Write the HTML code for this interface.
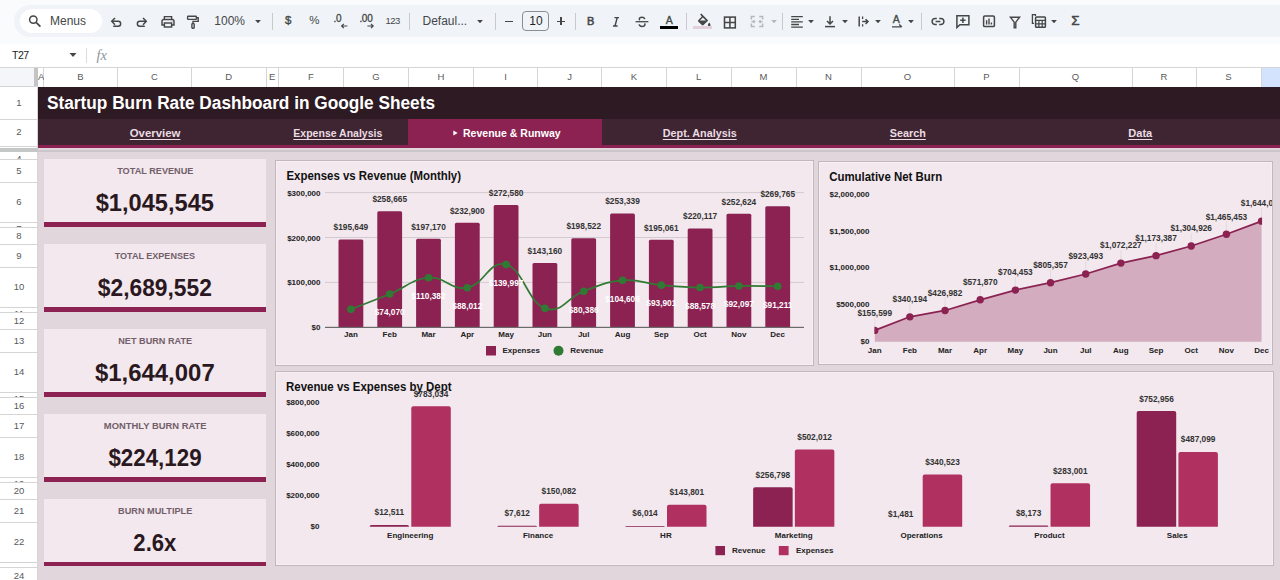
<!DOCTYPE html>
<html><head><meta charset="utf-8"><title>Startup Burn Rate Dashboard</title>
<style>
*{box-sizing:border-box;margin:0;padding:0}
html,body{width:1280px;height:580px;overflow:hidden;background:#f9fbfd;font-family:"Liberation Sans", sans-serif;}
.abs{position:absolute}
#root{position:relative;width:1280px;height:580px;overflow:hidden}
.ch{position:absolute;top:68px;height:19px;border-right:1px solid #d5d5d5;background:#fff;color:#575a5c;font-size:9.5px;line-height:18px;text-align:center}
.rh{position:absolute;left:0;width:38px;border-bottom:1px solid #d5d5d5;background:#fff;color:#575a5c;font-size:9.5px;text-align:center;overflow:hidden}
.tab{position:absolute;top:119px;height:26px;line-height:28.6px;text-underline-offset:1.6px;text-align:center;color:#eadce3;font-weight:bold;font-size:11.3px;text-decoration:underline}
.card{position:absolute;left:44px;width:222px;height:63px;background:#f2e8ee}
.cbar{position:absolute;left:44px;width:222px;height:5px;background:#8b2252}
.clab{position:absolute;left:44px;width:222px;text-align:center;color:#735f6a;font-weight:bold;font-size:9.2px;line-height:12px;white-space:nowrap}
.kv{display:inline-block}
.cval{position:absolute;left:44px;width:222px;text-align:center;color:#2a1820;font-weight:bold;font-size:23.5px;line-height:28px;white-space:nowrap}
.chart{position:absolute;background:#f2e8ee;border:1px solid #c2b7bd;overflow:hidden;box-shadow:inset 0 0 0 1px rgba(255,255,255,0.35)}
svg text{font-family:"Liberation Sans", sans-serif;}
.tb{position:absolute;top:0;height:42px}
</style></head><body><div id="root">

<div class="abs" style="left:14px;top:5px;width:1300px;height:32px;border-radius:16px;background:#f0f4f9"></div>
<div class="abs" style="left:20px;top:9px;width:82px;height:24px;border-radius:12px;background:#fff"></div>
<svg class="abs" style="left:25.00px;top:11.00px" width="20" height="20" viewBox="0 0 20 20" fill="none" stroke="#444746" stroke-width="1.5" ><circle cx="8.3" cy="8.6" r="3.7"/><path d="M11.1 11.4L15.4 15.7" stroke-width="1.7"/></svg>
<div class="abs" style="left:50px;top:13.56px;font-size:12px;line-height:14.40px;color:#444746;font-weight:normal;white-space:nowrap;">Menus</div>
<svg class="abs" style="left:106.00px;top:11.00px" width="20" height="20" viewBox="0 0 20 20" fill="none" stroke="#444746" stroke-width="1.45" ><path d="M6 10.3H12.2a2.45 2.45 0 0 1 0 4.9H7.2"/><path d="M9 6.9L5.7 10.3 9 13.7"/></svg>
<svg class="abs" style="left:131.60px;top:11.00px" width="20" height="20" viewBox="0 0 20 20" fill="none" stroke="#444746" stroke-width="1.45" ><path d="M14 10.3H7.8a2.45 2.45 0 0 0 0 4.9H12.8"/><path d="M11 6.9l3.3 3.4-3.3 3.4"/></svg>
<svg class="abs" style="left:157.80px;top:11.00px" width="20" height="20" viewBox="0 0 20 20" fill="none" stroke="#444746" stroke-width="1.45" ><path d="M6.4 8.4V5.6h7.2v2.8"/><path d="M6.2 14H4V10.2a1.8 1.8 0 0 1 1.8-1.8h8.4a1.8 1.8 0 0 1 1.8 1.8V14h-2.2"/><rect x="6.4" y="12" width="7.2" height="4"/><circle cx="14" cy="10.6" r="0.45" fill="#444746" stroke="none"/></svg>
<svg class="abs" style="left:183.00px;top:11.00px" width="20" height="20" viewBox="0 0 20 20" fill="none" stroke="#444746" stroke-width="1.4" ><rect x="4.6" y="5.2" width="8.8" height="3.2" rx="0.7"/><path d="M13.4 6.8h1.8v3.6H10v2.2"/><rect x="8.9" y="12.6" width="2.3" height="4.6" rx="0.6"/></svg>
<div class="abs" style="left:214.3px;top:13.56px;font-size:12px;line-height:14.40px;color:#444746;font-weight:normal;white-space:nowrap;">100%</div>
<svg class="abs" style="left:254.70px;top:19.90px" width="6" height="3.4" viewBox="0 0 6 3.4"><path d="M0.1 0.1h5.8L3 3.3z" fill="#444746"/></svg>
<div class="abs" style="left:272.00px;top:13px;width:1px;height:17px;background:#c7c9cc"></div>
<div class="abs" style="left:285.0px;top:13.90px;font-size:11.5px;line-height:13.80px;color:#444746;font-weight:normal;white-space:nowrap;-webkit-text-stroke:0.35px #444746;">$</div>
<div class="abs" style="left:309.2px;top:13.90px;font-size:11.5px;line-height:13.80px;color:#444746;font-weight:normal;white-space:nowrap;">%</div>
<div class="abs" style="left:333.4px;top:12.70px;font-size:10px;line-height:12.00px;color:#444746;font-weight:normal;white-space:nowrap;letter-spacing:-0.2px;-webkit-text-stroke:0.3px #444746;">.0</div>
<svg class="abs" style="left:340.00px;top:22.60px" width="9" height="6" viewBox="0 0 9 6" fill="none" stroke="#444746" stroke-width="1.5" ><path d="M7.4 3H1.6M3.8 0.8L1.6 3l2.2 2.2" stroke-width="1.2"/></svg>
<div class="abs" style="left:359.4px;top:12.70px;font-size:10px;line-height:12.00px;color:#444746;font-weight:normal;white-space:nowrap;letter-spacing:-0.3px;-webkit-text-stroke:0.3px #444746;">.00</div>
<svg class="abs" style="left:365.80px;top:22.60px" width="9" height="6" viewBox="0 0 9 6" fill="none" stroke="#444746" stroke-width="1.5" ><path d="M1.4 3h5.8M5 0.8L7.2 3 5 5.2" stroke-width="1.2"/></svg>
<div class="abs" style="left:385.4px;top:15.10px;font-size:9.5px;line-height:11.40px;color:#444746;font-weight:normal;white-space:nowrap;letter-spacing:-0.45px;">123</div>
<div class="abs" style="left:409.00px;top:13px;width:1px;height:17px;background:#c7c9cc"></div>
<div class="abs" style="left:422.5px;top:13.56px;font-size:12px;line-height:14.40px;color:#444746;font-weight:normal;white-space:nowrap;">Defaul...</div>
<svg class="abs" style="left:477.30px;top:19.90px" width="6" height="3.4" viewBox="0 0 6 3.4"><path d="M0.1 0.1h5.8L3 3.3z" fill="#444746"/></svg>
<div class="abs" style="left:495.00px;top:13px;width:1px;height:17px;background:#c7c9cc"></div>
<div class="abs" style="left:505px;top:20.6px;width:8px;height:1.4px;background:#444746"></div>
<div class="abs" style="left:521.6px;top:11.3px;width:27.2px;height:19.5px;border:1px solid #8b8e90;border-radius:4px"></div>
<div class="abs" style="left:529.3px;top:13.56px;font-size:12px;line-height:14.40px;color:#1f1f1f;font-weight:normal;white-space:nowrap;">10</div>
<div class="abs" style="left:557.1px;top:20.6px;width:8px;height:1.4px;background:#444746"></div>
<div class="abs" style="left:560.4px;top:17.3px;width:1.4px;height:8px;background:#444746"></div>
<div class="abs" style="left:574.50px;top:13px;width:1px;height:17px;background:#c7c9cc"></div>
<div class="abs" style="left:587.0px;top:15.00px;font-size:11px;line-height:13.20px;color:#444746;font-weight:normal;white-space:nowrap;-webkit-text-stroke:0.55px #444746;">B</div>
<svg class="abs" style="left:606.20px;top:11.20px" width="20" height="20" viewBox="0 0 20 20" fill="none" stroke="#444746" stroke-width="1.5" ><path d="M8.4 6.6h4.6M7 15h4.6M11.2 6.6L9 15" stroke-width="1.45"/></svg>
<svg class="abs" style="left:632.30px;top:11.00px" width="20" height="20" viewBox="0 0 20 20" fill="none" stroke="#444746" stroke-width="1.45" ><path d="M12.7 8.2c-.2-1.3-1.3-2-2.7-2-1.5 0-2.7.7-2.7 1.9 0 .5.15.8.4 1.1"/><path d="M7.1 13.4c.3 1.3 1.4 2 2.9 2 1.7 0 2.9-.8 2.9-2 0-.4-.1-.7-.3-1"/><path d="M3.6 10.7h12.8" stroke-width="1.3"/></svg>
<div class="abs" style="left:665.8px;top:14.00px;font-size:10.5px;line-height:12.60px;color:#444746;font-weight:normal;white-space:nowrap;-webkit-text-stroke:0.35px #444746;">A</div>
<div class="abs" style="left:660.2px;top:26.2px;width:18px;height:2.8px;background:#000"></div>
<div class="abs" style="left:685.50px;top:13px;width:1px;height:17px;background:#c7c9cc"></div>
<svg class="abs" style="left:693.00px;top:10.80px" width="20" height="20" viewBox="0 0 20 20" fill="none" stroke="#444746" stroke-width="1.5" ><path d="M7.2 3.6l1.1-1 6.9 6.9-4.6 4.6a1.3 1.3 0 0 1-1.8 0L5.4 10.7a1.3 1.3 0 0 1 0-1.8l3.4-3.4z" fill="#444746" stroke="none"/><path d="M6.9 9.4L9.9 6.4l3 3z" fill="#f0f4f9" stroke="none"/><path d="M16.2 11.6c.9 1.2 1.3 1.9 1.3 2.5a1.3 1.3 0 0 1-2.6 0c0-.6.4-1.3 1.3-2.5z" fill="#444746" stroke="none"/></svg>
<div class="abs" style="left:693.2px;top:26.2px;width:18.6px;height:2.8px;background:#e4d0da"></div>
<svg class="abs" style="left:719.90px;top:11.60px" width="20" height="20" viewBox="0 0 20 20" fill="none" stroke="#444746" stroke-width="1.55" ><rect x="4.5" y="5.1" width="10.8" height="10.8"/><path d="M9.9 5.1v10.8M4.5 10.5h10.8"/></svg>
<svg class="abs" style="left:746.80px;top:10.80px" width="20" height="20" viewBox="0 0 20 20" fill="none" stroke="#444746" stroke-width="1.5" ><path d="M4.4 8.6V5.6h3.4M12.2 5.6h3.4v3M4.4 12.6v3h3.4M12.2 15.6h3.4v-3" stroke="#b4b7bb"/><path d="M4.4 10.6h3.2M6.4 9.2l1.4 1.4-1.4 1.4M15.6 10.6h-3.2M13.6 9.2l-1.4 1.4 1.4 1.4" stroke="#b4b7bb" stroke-width="1.2"/></svg>
<svg class="abs" style="left:771.00px;top:19.90px" width="6" height="3.4" viewBox="0 0 6 3.4"><path d="M0.1 0.1h5.8L3 3.3z" fill="#b4b7bb"/></svg>
<div class="abs" style="left:782.00px;top:13px;width:1px;height:17px;background:#c7c9cc"></div>
<svg class="abs" style="left:787.00px;top:11.00px" width="20" height="20" viewBox="0 0 20 20" fill="none" stroke="#444746" stroke-width="1.5" ><path d="M4.2 5.7h11.6M4.2 8.3h7.8M4.2 10.9h11.6M4.2 13.5h7.8M4.2 16.1h11.6" stroke-width="1.3"/></svg>
<svg class="abs" style="left:808.30px;top:19.90px" width="6" height="3.4" viewBox="0 0 6 3.4"><path d="M0.1 0.1h5.8L3 3.3z" fill="#444746"/></svg>
<svg class="abs" style="left:819.80px;top:11.00px" width="20" height="20" viewBox="0 0 20 20" fill="none" stroke="#444746" stroke-width="1.5" ><path d="M10 5.2v7.6M7 10l3 3 3-3"/><path d="M5 15.6h10"/></svg>
<svg class="abs" style="left:842.00px;top:19.90px" width="6" height="3.4" viewBox="0 0 6 3.4"><path d="M0.1 0.1h5.8L3 3.3z" fill="#444746"/></svg>
<svg class="abs" style="left:852.50px;top:11.00px" width="20" height="20" viewBox="0 0 20 20" fill="none" stroke="#444746" stroke-width="1.5" ><path d="M6.2 5.6v10"/><path d="M9.2 10.6h5.6M12.6 8.2l2.4 2.4-2.4 2.4"/><path d="M9.6 5.6v2.4M9.6 13.2v2.4" stroke-width="1.3"/></svg>
<svg class="abs" style="left:875.30px;top:19.90px" width="6" height="3.4" viewBox="0 0 6 3.4"><path d="M0.1 0.1h5.8L3 3.3z" fill="#444746"/></svg>
<div class="abs" style="left:892.8px;top:13.20px;font-size:10.5px;line-height:12.60px;color:#444746;font-weight:normal;white-space:nowrap;-webkit-text-stroke:0.35px #444746;">A</div>
<svg class="abs" style="left:887.00px;top:12.00px" width="20" height="20" viewBox="0 0 20 20" fill="none" stroke="#444746" stroke-width="1.5" ><path d="M5 14.8h9.6M12.2 12.4l2.6 2.4" stroke-width="1.3"/></svg>
<svg class="abs" style="left:908.20px;top:19.90px" width="6" height="3.4" viewBox="0 0 6 3.4"><path d="M0.1 0.1h5.8L3 3.3z" fill="#444746"/></svg>
<div class="abs" style="left:920.50px;top:13px;width:1px;height:17px;background:#c7c9cc"></div>
<svg class="abs" style="left:927.50px;top:11.10px" width="20" height="20" viewBox="0 0 20 20" fill="none" stroke="#444746" stroke-width="1.5" ><path d="M8.8 7.4H7.2a3.1 3.1 0 0 0 0 6.2h1.6M11.2 7.4h1.6a3.1 3.1 0 0 1 0 6.2h-1.6M7.6 10.5h4.8"/></svg>
<svg class="abs" style="left:952.80px;top:11.20px" width="20" height="20" viewBox="0 0 20 20" fill="none" stroke="#444746" stroke-width="1.5" ><path d="M3.9 4.8h12v9H6.9L3.9 16.6z"/><path d="M9.9 6.6v5.4M7.2 9.3h5.4" stroke-width="1.5"/></svg>
<svg class="abs" style="left:979.20px;top:11.20px" width="20" height="20" viewBox="0 0 20 20" fill="none" stroke="#444746" stroke-width="1.5" ><rect x="4.6" y="5" width="10.8" height="10.6" rx="1.2"/><path d="M7.6 13.4V9.2M10 13.4V7.6M12.4 13.4v-1.8" stroke-width="1.4"/></svg>
<svg class="abs" style="left:1005.10px;top:11.50px" width="20" height="20" viewBox="0 0 20 20" fill="none" stroke="#444746" stroke-width="1.5" ><path d="M5.4 5.2h9.2L10.8 10.2v5.6H9.2v-5.6z" stroke-width="1.4"/></svg>
<svg class="abs" style="left:1029.00px;top:11.30px" width="20" height="20" viewBox="0 0 20 20" fill="none" stroke="#444746" stroke-width="1.5" ><path d="M6.4 5V3.6h-3v8.8h1.6" stroke-width="1.3"/><rect x="6.6" y="6" width="9.8" height="10.2" rx="0.8"/><path d="M6.6 9.4h9.8M9.9 9.4v6.8M13.2 9.4v6.8M6.6 12.8h9.8" stroke-width="1.2"/></svg>
<svg class="abs" style="left:1051.00px;top:19.90px" width="6" height="3.4" viewBox="0 0 6 3.4"><path d="M0.1 0.1h5.8L3 3.3z" fill="#444746"/></svg>
<div class="abs" style="left:1071.2px;top:12.80px;font-size:13.5px;line-height:16.20px;color:#444746;font-weight:normal;white-space:nowrap;-webkit-text-stroke:0.5px #444746;">&Sigma;</div>
<div class="abs" style="left:0;top:44px;width:1280px;height:24px;background:#fff;border-bottom:1px solid #e1e3e1"></div>
<div class="abs" style="left:12px;top:49px;font-size:10.5px;line-height:13px;color:#202124;letter-spacing:-0.5px">T27</div>
<svg class="abs" style="left:68px;top:52px" width="10" height="6" viewBox="0 0 10 6"><path d="M1.5 1h7L5 5z" fill="#444746"/></svg>
<div class="abs" style="left:86px;top:48px;width:1px;height:15px;background:#dadce0"></div>
<div class="abs" style="left:96.5px;top:46.5px;font-size:14.5px;line-height:17px;color:#8f959b;font-style:italic;font-family:'Liberation Serif',serif">fx</div>
<div class="abs" style="left:0;top:67px;width:1280px;height:1px;background:#d5d5d5"></div>
<div class="abs" style="left:0;top:68px;width:38px;height:19px;background:#f4f6f9"></div>
<div class="abs" style="left:34px;top:68px;width:4px;height:19px;background:#c2c4c6"></div>
<div class="abs" style="left:0;top:86px;width:38px;height:1px;background:#d5d5d5"></div>
<div class="ch" style="left:38px;width:6px;background:#fff">A</div>
<div class="ch" style="left:44px;width:74px;background:#fff">B</div>
<div class="ch" style="left:118px;width:74px;background:#fff">C</div>
<div class="ch" style="left:192px;width:74.5px;background:#fff">D</div>
<div class="ch" style="left:266.5px;width:12.5px;background:#fff">E</div>
<div class="ch" style="left:279px;width:65px;background:#fff">F</div>
<div class="ch" style="left:344px;width:65px;background:#fff">G</div>
<div class="ch" style="left:409px;width:65px;background:#fff">H</div>
<div class="ch" style="left:474px;width:64px;background:#fff">I</div>
<div class="ch" style="left:538px;width:64px;background:#fff">J</div>
<div class="ch" style="left:602px;width:65px;background:#fff">K</div>
<div class="ch" style="left:667px;width:64.5px;background:#fff">L</div>
<div class="ch" style="left:731.5px;width:65.0px;background:#fff">M</div>
<div class="ch" style="left:796.5px;width:65.0px;background:#fff">N</div>
<div class="ch" style="left:861.5px;width:93.0px;background:#fff">O</div>
<div class="ch" style="left:954.5px;width:65.0px;background:#fff">P</div>
<div class="ch" style="left:1019.5px;width:113.0px;background:#fff">Q</div>
<div class="ch" style="left:1132.5px;width:64.0px;background:#fff">R</div>
<div class="ch" style="left:1196.5px;width:65.0px;background:#fff">S</div>
<div class="ch" style="left:1261.5px;width:28.5px;background:#d3e3fd"></div>
<div class="abs" style="left:0;top:87px;width:38px;height:500px;background:#fff"></div>
<div class="rh" style="top:88px;height:32px;line-height:30px">1</div>
<div class="rh" style="top:120px;height:26.599999999999994px;line-height:24.599999999999994px">2</div>
<div class="rh" style="top:153px;height:7px;line-height:12px"><span style="position:relative;top:0px">4</span></div>
<div class="rh" style="top:160px;height:23px;line-height:21px">5</div>
<div class="rh" style="top:183px;height:40px;line-height:38px">6</div>
<div class="rh" style="top:223px;height:5px;line-height:12px"><span style="position:relative;top:-0.5px">7</span></div>
<div class="rh" style="top:228px;height:17px;line-height:15px">8</div>
<div class="rh" style="top:245px;height:23px;line-height:21px">9</div>
<div class="rh" style="top:268px;height:40px;line-height:38px">10</div>
<div class="rh" style="top:308px;height:5px;line-height:12px"><span style="position:relative;top:-0.5px">11</span></div>
<div class="rh" style="top:313px;height:17px;line-height:15px">12</div>
<div class="rh" style="top:330px;height:23px;line-height:21px">13</div>
<div class="rh" style="top:353px;height:40px;line-height:38px">14</div>
<div class="rh" style="top:393px;height:5px;line-height:12px"><span style="position:relative;top:-0.5px">15</span></div>
<div class="rh" style="top:398px;height:17px;line-height:15px">16</div>
<div class="rh" style="top:415px;height:23px;line-height:21px">17</div>
<div class="rh" style="top:438px;height:40px;line-height:38px">18</div>
<div class="rh" style="top:478px;height:5px;line-height:12px"><span style="position:relative;top:-0.5px">19</span></div>
<div class="rh" style="top:483px;height:17px;line-height:15px">20</div>
<div class="rh" style="top:500px;height:23px;line-height:21px">21</div>
<div class="rh" style="top:523px;height:40px;line-height:38px">22</div>
<div class="rh" style="top:563px;height:5px;line-height:12px"><span style="position:relative;top:-0.5px"></span></div>
<div class="rh" style="top:568px;height:17px;line-height:15px">24</div>
<div class="abs" style="left:37px;top:87px;width:1px;height:500px;background:#d5d5d5"></div>
<div class="abs" style="left:38px;top:152px;width:1242px;height:428px;background:#e2d6dd"></div>
<div class="abs" style="left:38px;top:87px;width:1242px;height:32px;background:#2e1a22"></div>
<div class="abs" id="title" style="left:47px;top:91px;font-size:18px;line-height:24px;font-weight:bold;color:#fff;white-space:nowrap;transform-origin:0 50%;transform:scaleX(0.958)">Startup Burn Rate Dashboard in Google Sheets</div>
<div class="abs" style="left:38px;top:119px;width:1242px;height:26px;background:#3e2531"></div>
<div class="abs" style="left:408px;top:119px;width:194px;height:26px;background:#8b2252"></div>
<div class="abs" style="left:38px;top:145px;width:1242px;height:3px;background:#8b2252"></div>
<div class="tab" style="left:44px;width:222.5px"><span style="display:inline-block;text-decoration:underline;transform:scaleX(1.0100)">Overview</span></div>
<div class="tab" style="left:266.5px;width:142.5px"><span style="display:inline-block;text-decoration:underline;transform:scaleX(0.9300)">Expense Analysis</span></div>
<div class="tab" style="left:602px;width:194.5px"><span style="display:inline-block;text-decoration:underline;transform:scaleX(0.9548)">Dept. Analysis</span></div>
<div class="tab" style="left:796.5px;width:223.0px"><span style="display:inline-block;text-decoration:underline;transform:scaleX(0.9549)">Search</span></div>
<div class="tab" style="left:1019.5px;width:242.0px"><span style="display:inline-block;text-decoration:underline;transform:scaleX(0.9796)">Data</span></div>
<svg class="abs" style="left:453px;top:129.6px" width="5" height="6" viewBox="0 0 5 6"><path d="M0.3 0.4L4.7 3 0.3 5.6z" fill="#fff"/></svg>
<div class="tab" style="left:463px;width:auto;color:#fff;text-decoration:none;text-align:left;white-space:nowrap"><span style="display:inline-block;transform-origin:0 50%;transform:scaleX(0.9318)">Revenue &amp; Runway</span></div>
<div class="abs" style="left:0;top:148px;width:38px;height:4px;background:#c4c7c5"></div>
<div class="abs" style="left:38px;top:148px;width:1242px;height:2px;background:#e2d6dd"></div>
<div class="abs" style="left:38px;top:149.5px;width:1242px;height:2.5px;background:#cbc6c9"></div>
<div class="card" style="top:159px"></div>
<div class="clab" style="top:165.1px"><span class="kl" style="display:inline-block;transform:scaleX(0.9948)">TOTAL REVENUE</span></div>
<div class="cval" style="top:188.9px"><span class="kv" style="transform:scaleX(1.0060)">$1,045,545</span></div>
<div class="cbar" style="top:222px;height:5px"></div>
<div class="card" style="top:244px"></div>
<div class="clab" style="top:250.1px"><span class="kl" style="display:inline-block;transform:scaleX(0.9817)">TOTAL EXPENSES</span></div>
<div class="cval" style="top:273.9px"><span class="kv" style="transform:scaleX(0.9694)">$2,689,552</span></div>
<div class="cbar" style="top:307px;height:5px"></div>
<div class="card" style="top:329px"></div>
<div class="clab" style="top:335.1px"><span class="kl" style="display:inline-block;transform:scaleX(0.9933)">NET BURN RATE</span></div>
<div class="cval" style="top:358.9px"><span class="kv" style="transform:scaleX(1.0187)">$1,644,007</span></div>
<div class="cbar" style="top:392px;height:5px"></div>
<div class="card" style="top:414px"></div>
<div class="clab" style="top:420.1px"><span class="kl" style="display:inline-block;transform:scaleX(1.0229)">MONTHLY BURN RATE</span></div>
<div class="cval" style="top:443.9px"><span class="kv" style="transform:scaleX(0.9500)">$224,129</span></div>
<div class="cbar" style="top:477px;height:5px"></div>
<div class="card" style="top:499px"></div>
<div class="clab" style="top:505.1px"><span class="kl" style="display:inline-block;transform:scaleX(0.9973)">BURN MULTIPLE</span></div>
<div class="cval" style="top:528.9px"><span class="kv" style="transform:scaleX(0.9409)">2.6x</span></div>
<div class="cbar" style="top:562px;height:3.6px"></div>
<div class="chart" style="left:275px;top:160px;width:539px;height:206px"><svg width="537" height="204" viewBox="276 161 537 204" style="display:block">
<text x="286.5" y="180" font-size="12" font-weight="bold" fill="#111" textLength="174.5" lengthAdjust="spacingAndGlyphs">Expenses vs Revenue (Monthly)</text>
<rect x="325" y="281.90" width="479" height="1" fill="#d3cad0"/>
<rect x="325" y="237.00" width="479" height="1" fill="#d3cad0"/>
<rect x="325" y="192.10" width="479" height="1" fill="#d3cad0"/>
<text x="320.5" y="330.30" font-size="8" font-weight="bold" fill="#222" text-anchor="end">$0</text>
<text x="320.5" y="285.40" font-size="8" font-weight="bold" fill="#222" text-anchor="end">$100,000</text>
<text x="320.5" y="240.50" font-size="8" font-weight="bold" fill="#222" text-anchor="end">$200,000</text>
<text x="320.5" y="195.60" font-size="8" font-weight="bold" fill="#222" text-anchor="end">$300,000</text>
<path d="M338.50 327.30V240.95q0 -1.5 1.5 -1.5H361.80q1.5 0 1.5 1.5V327.30z" fill="#8b2252"/>
<text x="350.90" y="230.25" font-size="8.3" font-weight="bold" fill="#333" text-anchor="middle">$195,649</text>
<text x="350.90" y="336.8" font-size="8" font-weight="bold" fill="#222" text-anchor="middle">Jan</text>
<path d="M377.30 327.30V212.66q0 -1.5 1.5 -1.5H400.60q1.5 0 1.5 1.5V327.30z" fill="#8b2252"/>
<text x="389.70" y="201.96" font-size="8.3" font-weight="bold" fill="#333" text-anchor="middle">$258,665</text>
<text x="389.70" y="336.8" font-size="8" font-weight="bold" fill="#222" text-anchor="middle">Feb</text>
<path d="M416.10 327.30V240.27q0 -1.5 1.5 -1.5H439.40q1.5 0 1.5 1.5V327.30z" fill="#8b2252"/>
<text x="428.50" y="229.57" font-size="8.3" font-weight="bold" fill="#333" text-anchor="middle">$197,170</text>
<text x="428.50" y="336.8" font-size="8" font-weight="bold" fill="#222" text-anchor="middle">Mar</text>
<path d="M454.90 327.30V224.23q0 -1.5 1.5 -1.5H478.20q1.5 0 1.5 1.5V327.30z" fill="#8b2252"/>
<text x="467.30" y="213.53" font-size="8.3" font-weight="bold" fill="#333" text-anchor="middle">$232,900</text>
<text x="467.30" y="336.8" font-size="8" font-weight="bold" fill="#222" text-anchor="middle">Apr</text>
<path d="M493.70 327.30V206.41q0 -1.5 1.5 -1.5H517.00q1.5 0 1.5 1.5V327.30z" fill="#8b2252"/>
<text x="506.10" y="195.71" font-size="8.3" font-weight="bold" fill="#333" text-anchor="middle">$272,580</text>
<text x="506.10" y="336.8" font-size="8" font-weight="bold" fill="#222" text-anchor="middle">May</text>
<path d="M532.50 327.30V264.52q0 -1.5 1.5 -1.5H555.80q1.5 0 1.5 1.5V327.30z" fill="#8b2252"/>
<text x="544.90" y="253.82" font-size="8.3" font-weight="bold" fill="#333" text-anchor="middle">$143,160</text>
<text x="544.90" y="336.8" font-size="8" font-weight="bold" fill="#222" text-anchor="middle">Jun</text>
<path d="M571.30 327.30V239.66q0 -1.5 1.5 -1.5H594.60q1.5 0 1.5 1.5V327.30z" fill="#8b2252"/>
<text x="583.70" y="228.96" font-size="8.3" font-weight="bold" fill="#333" text-anchor="middle">$198,522</text>
<text x="583.70" y="336.8" font-size="8" font-weight="bold" fill="#222" text-anchor="middle">Jul</text>
<path d="M610.10 327.30V215.05q0 -1.5 1.5 -1.5H633.40q1.5 0 1.5 1.5V327.30z" fill="#8b2252"/>
<text x="622.50" y="204.35" font-size="8.3" font-weight="bold" fill="#333" text-anchor="middle">$253,339</text>
<text x="622.50" y="336.8" font-size="8" font-weight="bold" fill="#222" text-anchor="middle">Aug</text>
<path d="M648.90 327.30V241.22q0 -1.5 1.5 -1.5H672.20q1.5 0 1.5 1.5V327.30z" fill="#8b2252"/>
<text x="661.30" y="230.52" font-size="8.3" font-weight="bold" fill="#333" text-anchor="middle">$195,061</text>
<text x="661.30" y="336.8" font-size="8" font-weight="bold" fill="#222" text-anchor="middle">Sep</text>
<path d="M687.70 327.30V229.97q0 -1.5 1.5 -1.5H711.00q1.5 0 1.5 1.5V327.30z" fill="#8b2252"/>
<text x="700.10" y="219.27" font-size="8.3" font-weight="bold" fill="#333" text-anchor="middle">$220,117</text>
<text x="700.10" y="336.8" font-size="8" font-weight="bold" fill="#222" text-anchor="middle">Oct</text>
<path d="M726.50 327.30V215.37q0 -1.5 1.5 -1.5H749.80q1.5 0 1.5 1.5V327.30z" fill="#8b2252"/>
<text x="738.90" y="204.67" font-size="8.3" font-weight="bold" fill="#333" text-anchor="middle">$252,624</text>
<text x="738.90" y="336.8" font-size="8" font-weight="bold" fill="#222" text-anchor="middle">Nov</text>
<path d="M765.30 327.30V207.68q0 -1.5 1.5 -1.5H788.60q1.5 0 1.5 1.5V327.30z" fill="#8b2252"/>
<text x="777.70" y="196.98" font-size="8.3" font-weight="bold" fill="#333" text-anchor="middle">$269,765</text>
<text x="777.70" y="336.8" font-size="8" font-weight="bold" fill="#222" text-anchor="middle">Dec</text>
<rect x="325" y="326.80" width="479" height="1.2" fill="#6b6b6b"/>
<path d="M350.90 309.32C359.44 305.96 372.63 300.99 389.70 294.04C406.77 287.10 411.43 279.12 428.50 277.74C445.57 276.36 450.23 290.71 467.30 287.78C484.37 284.86 489.03 259.92 506.10 264.44C523.17 268.96 527.83 302.44 544.90 308.33C561.97 314.22 566.63 297.37 583.70 291.21C600.77 285.05 605.43 281.67 622.50 280.33C639.57 279.00 644.23 283.56 661.30 285.14C678.37 286.72 683.03 287.35 700.10 287.53C717.17 287.71 721.83 286.21 738.90 285.95C755.97 285.69 769.16 286.26 777.70 286.35" fill="none" stroke="#317a33" stroke-width="1.7"/>
<circle cx="350.90" cy="309.32" r="3.8" fill="#317a33"/>
<circle cx="389.70" cy="294.04" r="3.8" fill="#317a33"/>
<circle cx="428.50" cy="277.74" r="3.8" fill="#317a33"/>
<circle cx="467.30" cy="287.78" r="3.8" fill="#317a33"/>
<circle cx="506.10" cy="264.44" r="3.8" fill="#317a33"/>
<circle cx="544.90" cy="308.33" r="3.8" fill="#317a33"/>
<circle cx="583.70" cy="291.21" r="3.8" fill="#317a33"/>
<circle cx="622.50" cy="280.33" r="3.8" fill="#317a33"/>
<circle cx="661.30" cy="285.14" r="3.8" fill="#317a33"/>
<circle cx="700.10" cy="287.53" r="3.8" fill="#317a33"/>
<circle cx="738.90" cy="285.95" r="3.8" fill="#317a33"/>
<circle cx="777.70" cy="286.35" r="3.8" fill="#317a33"/>
<text x="389.70" y="315.34" font-size="8.3" font-weight="bold" fill="#fff" text-anchor="middle">$74,070</text>
<text x="428.50" y="299.04" font-size="8.3" font-weight="bold" fill="#fff" text-anchor="middle">$110,382</text>
<text x="467.30" y="309.08" font-size="8.3" font-weight="bold" fill="#fff" text-anchor="middle">$88,012</text>
<text x="506.10" y="285.74" font-size="8.3" font-weight="bold" fill="#fff" text-anchor="middle">$139,997</text>
<text x="583.70" y="312.51" font-size="8.3" font-weight="bold" fill="#fff" text-anchor="middle">$80,386</text>
<text x="622.50" y="301.63" font-size="8.3" font-weight="bold" fill="#fff" text-anchor="middle">$104,605</text>
<text x="661.30" y="306.44" font-size="8.3" font-weight="bold" fill="#fff" text-anchor="middle">$93,901</text>
<text x="700.10" y="308.83" font-size="8.3" font-weight="bold" fill="#fff" text-anchor="middle">$88,578</text>
<text x="738.90" y="307.25" font-size="8.3" font-weight="bold" fill="#fff" text-anchor="middle">$92,097</text>
<text x="777.70" y="307.65" font-size="8.3" font-weight="bold" fill="#fff" text-anchor="middle">$91,211</text>
<rect x="486" y="346" width="10" height="9.5" fill="#8b2252"/>
<text x="502.5" y="352.7" font-size="8" font-weight="bold" fill="#222">Expenses</text>
<circle cx="558.5" cy="350.7" r="5" fill="#317a33"/>
<text x="570.2" y="352.7" font-size="8" font-weight="bold" fill="#222">Revenue</text>
</svg></div>
<div class="chart" style="left:818px;top:161px;width:455px;height:204px"><svg width="453" height="202" viewBox="819 162 453 202" style="display:block">
<text x="829.2" y="181" font-size="12" font-weight="bold" fill="#111" textLength="113" lengthAdjust="spacingAndGlyphs">Cumulative Net Burn</text>
<text x="869.5" y="343.80" font-size="8" font-weight="bold" fill="#222" text-anchor="end">$0</text>
<text x="869.5" y="307.10" font-size="8" font-weight="bold" fill="#222" text-anchor="end">$500,000</text>
<text x="869.5" y="270.40" font-size="8" font-weight="bold" fill="#222" text-anchor="end">$1,000,000</text>
<text x="869.5" y="233.70" font-size="8" font-weight="bold" fill="#222" text-anchor="end">$1,500,000</text>
<text x="869.5" y="197.00" font-size="8" font-weight="bold" fill="#222" text-anchor="end">$2,000,000</text>
<defs><clipPath id="c2"><rect x="874.40" y="170" width="387.67" height="180"/></clipPath></defs>
<g clip-path="url(#c2)">
<path d="M874.70 330.38 L909.87 316.83 L945.04 310.46 L980.21 299.82 L1015.38 290.09 L1050.55 282.69 L1085.72 274.02 L1120.89 263.10 L1156.06 255.67 L1191.23 246.02 L1226.40 234.24 L1261.57 221.13 L1261.57 341.8 L874.70 341.8z" fill="#8b2252" fill-opacity="0.3"/>
<rect x="874.20" y="317.38" width="1" height="10" fill="#c9bfc4" fill-opacity="0.35"/>
<rect x="909.37" y="303.83" width="1" height="10" fill="#c9bfc4" fill-opacity="0.35"/>
<rect x="944.54" y="297.46" width="1" height="10" fill="#c9bfc4" fill-opacity="0.35"/>
<rect x="979.71" y="286.82" width="1" height="10" fill="#c9bfc4" fill-opacity="0.35"/>
<rect x="1014.88" y="277.09" width="1" height="10" fill="#c9bfc4" fill-opacity="0.35"/>
<rect x="1050.05" y="269.69" width="1" height="10" fill="#c9bfc4" fill-opacity="0.35"/>
<rect x="1085.22" y="261.02" width="1" height="10" fill="#c9bfc4" fill-opacity="0.35"/>
<rect x="1120.39" y="250.10" width="1" height="10" fill="#c9bfc4" fill-opacity="0.35"/>
<rect x="1155.56" y="242.67" width="1" height="10" fill="#c9bfc4" fill-opacity="0.35"/>
<rect x="1190.73" y="233.02" width="1" height="10" fill="#c9bfc4" fill-opacity="0.35"/>
<rect x="1225.90" y="221.24" width="1" height="10" fill="#c9bfc4" fill-opacity="0.35"/>
<rect x="1261.07" y="208.13" width="1" height="10" fill="#c9bfc4" fill-opacity="0.35"/>
<path d="M874.70 330.38 L909.87 316.83 L945.04 310.46 L980.21 299.82 L1015.38 290.09 L1050.55 282.69 L1085.72 274.02 L1120.89 263.10 L1156.06 255.67 L1191.23 246.02 L1226.40 234.24 L1261.57 221.13" fill="none" stroke="#8b2252" stroke-width="1.7" stroke-linejoin="round"/>
<circle cx="874.70" cy="330.38" r="3.7" fill="#8b2252"/>
<circle cx="909.87" cy="316.83" r="3.7" fill="#8b2252"/>
<circle cx="945.04" cy="310.46" r="3.7" fill="#8b2252"/>
<circle cx="980.21" cy="299.82" r="3.7" fill="#8b2252"/>
<circle cx="1015.38" cy="290.09" r="3.7" fill="#8b2252"/>
<circle cx="1050.55" cy="282.69" r="3.7" fill="#8b2252"/>
<circle cx="1085.72" cy="274.02" r="3.7" fill="#8b2252"/>
<circle cx="1120.89" cy="263.10" r="3.7" fill="#8b2252"/>
<circle cx="1156.06" cy="255.67" r="3.7" fill="#8b2252"/>
<circle cx="1191.23" cy="246.02" r="3.7" fill="#8b2252"/>
<circle cx="1226.40" cy="234.24" r="3.7" fill="#8b2252"/>
<circle cx="1261.57" cy="221.13" r="3.7" fill="#8b2252"/>
</g>
<text x="874.70" y="315.68" font-size="8.3" font-weight="bold" fill="#333" text-anchor="middle">$155,599</text>
<text x="874.70" y="353.4" font-size="8" font-weight="bold" fill="#222" text-anchor="middle">Jan</text>
<text x="909.87" y="302.13" font-size="8.3" font-weight="bold" fill="#333" text-anchor="middle">$340,194</text>
<text x="909.87" y="353.4" font-size="8" font-weight="bold" fill="#222" text-anchor="middle">Feb</text>
<text x="945.04" y="295.76" font-size="8.3" font-weight="bold" fill="#333" text-anchor="middle">$426,982</text>
<text x="945.04" y="353.4" font-size="8" font-weight="bold" fill="#222" text-anchor="middle">Mar</text>
<text x="980.21" y="285.12" font-size="8.3" font-weight="bold" fill="#333" text-anchor="middle">$571,870</text>
<text x="980.21" y="353.4" font-size="8" font-weight="bold" fill="#222" text-anchor="middle">Apr</text>
<text x="1015.38" y="275.39" font-size="8.3" font-weight="bold" fill="#333" text-anchor="middle">$704,453</text>
<text x="1015.38" y="353.4" font-size="8" font-weight="bold" fill="#222" text-anchor="middle">May</text>
<text x="1050.55" y="267.99" font-size="8.3" font-weight="bold" fill="#333" text-anchor="middle">$805,357</text>
<text x="1050.55" y="353.4" font-size="8" font-weight="bold" fill="#222" text-anchor="middle">Jun</text>
<text x="1085.72" y="259.32" font-size="8.3" font-weight="bold" fill="#333" text-anchor="middle">$923,493</text>
<text x="1085.72" y="353.4" font-size="8" font-weight="bold" fill="#222" text-anchor="middle">Jul</text>
<text x="1120.89" y="248.40" font-size="8.3" font-weight="bold" fill="#333" text-anchor="middle">$1,072,227</text>
<text x="1120.89" y="353.4" font-size="8" font-weight="bold" fill="#222" text-anchor="middle">Aug</text>
<text x="1156.06" y="240.97" font-size="8.3" font-weight="bold" fill="#333" text-anchor="middle">$1,173,387</text>
<text x="1156.06" y="353.4" font-size="8" font-weight="bold" fill="#222" text-anchor="middle">Sep</text>
<text x="1191.23" y="231.32" font-size="8.3" font-weight="bold" fill="#333" text-anchor="middle">$1,304,926</text>
<text x="1191.23" y="353.4" font-size="8" font-weight="bold" fill="#222" text-anchor="middle">Oct</text>
<text x="1226.40" y="219.54" font-size="8.3" font-weight="bold" fill="#333" text-anchor="middle">$1,465,453</text>
<text x="1226.40" y="353.4" font-size="8" font-weight="bold" fill="#222" text-anchor="middle">Nov</text>
<text x="1261.57" y="206.43" font-size="8.3" font-weight="bold" fill="#333" text-anchor="middle">$1,644,007</text>
<text x="1261.57" y="353.4" font-size="8" font-weight="bold" fill="#222" text-anchor="middle">Dec</text>
</svg></div>
<div class="chart" style="left:275px;top:371px;width:999px;height:195px"><svg width="997" height="193" viewBox="276 372 997 193" style="display:block">
<text x="286" y="390.7" font-size="12" font-weight="bold" fill="#111" textLength="165.5" lengthAdjust="spacingAndGlyphs">Revenue vs Expenses by Dept</text>
<text x="319.5" y="528.70" font-size="8" font-weight="bold" fill="#222" text-anchor="end">$0</text>
<text x="319.5" y="497.84" font-size="8" font-weight="bold" fill="#222" text-anchor="end">$200,000</text>
<text x="319.5" y="466.98" font-size="8" font-weight="bold" fill="#222" text-anchor="end">$400,000</text>
<text x="319.5" y="436.12" font-size="8" font-weight="bold" fill="#222" text-anchor="end">$600,000</text>
<text x="319.5" y="405.26" font-size="8" font-weight="bold" fill="#222" text-anchor="end">$800,000</text>
<path d="M369.60 526.80V526.80q0 -1.9241917999999998 1.9241917999999998 -1.9241917999999998H407.18q1.9241917999999998 0 1.9241917999999998 1.9241917999999998V526.80z" fill="#8b2252"/>
<path d="M411.30 526.80V408.37q0 -2 2 -2H448.80q2 0 2 2V526.80z" fill="#b03060"/>
<text x="389.35" y="515.38" font-size="8.3" font-weight="bold" fill="#333" text-anchor="middle">$12,511</text>
<text x="431.05" y="396.87" font-size="8.3" font-weight="bold" fill="#333" text-anchor="middle">$783,034</text>
<text x="410.20" y="538" font-size="8" font-weight="bold" fill="#222" text-anchor="middle">Engineering</text>
<path d="M497.45 526.80V526.80q0 -1.1707256 1.1707256 -1.1707256H535.78q1.1707256 0 1.1707256 1.1707256V526.80z" fill="#8b2252"/>
<path d="M539.15 526.80V505.72q0 -2 2 -2H576.65q2 0 2 2V526.80z" fill="#b03060"/>
<text x="517.20" y="516.13" font-size="8.3" font-weight="bold" fill="#333" text-anchor="middle">$7,612</text>
<text x="558.90" y="494.22" font-size="8.3" font-weight="bold" fill="#333" text-anchor="middle">$150,082</text>
<text x="538.05" y="538" font-size="8" font-weight="bold" fill="#222" text-anchor="middle">Finance</text>
<path d="M625.30 526.80V526.80q0 -0.9249532 0.9249532 -0.9249532H663.88q0.9249532 0 0.9249532 0.9249532V526.80z" fill="#8b2252"/>
<path d="M667.00 526.80V506.68q0 -2 2 -2H704.50q2 0 2 2V526.80z" fill="#b03060"/>
<text x="645.05" y="516.38" font-size="8.3" font-weight="bold" fill="#333" text-anchor="middle">$6,014</text>
<text x="686.75" y="495.18" font-size="8.3" font-weight="bold" fill="#333" text-anchor="middle">$143,801</text>
<text x="665.90" y="538" font-size="8" font-weight="bold" fill="#222" text-anchor="middle">HR</text>
<path d="M753.15 526.80V489.30q0 -2 2 -2H790.65q2 0 2 2V526.80z" fill="#8b2252"/>
<path d="M794.85 526.80V451.59q0 -2 2 -2H832.35q2 0 2 2V526.80z" fill="#b03060"/>
<text x="772.90" y="477.80" font-size="8.3" font-weight="bold" fill="#333" text-anchor="middle">$256,798</text>
<text x="814.60" y="440.09" font-size="8.3" font-weight="bold" fill="#333" text-anchor="middle">$502,012</text>
<text x="793.75" y="538" font-size="8" font-weight="bold" fill="#222" text-anchor="middle">Marketing</text>

<path d="M922.70 526.80V476.43q0 -2 2 -2H960.20q2 0 2 2V526.80z" fill="#b03060"/>
<text x="900.75" y="517.07" font-size="8.3" font-weight="bold" fill="#333" text-anchor="middle">$1,481</text>
<text x="942.45" y="464.93" font-size="8.3" font-weight="bold" fill="#333" text-anchor="middle">$340,523</text>
<text x="921.60" y="538" font-size="8" font-weight="bold" fill="#222" text-anchor="middle">Operations</text>
<path d="M1008.85 526.80V526.80q0 -1.2570074 1.2570074 -1.2570074H1047.09q1.2570074 0 1.2570074 1.2570074V526.80z" fill="#8b2252"/>
<path d="M1050.55 526.80V485.27q0 -2 2 -2H1088.05q2 0 2 2V526.80z" fill="#b03060"/>
<text x="1028.60" y="516.04" font-size="8.3" font-weight="bold" fill="#333" text-anchor="middle">$8,173</text>
<text x="1070.30" y="473.77" font-size="8.3" font-weight="bold" fill="#333" text-anchor="middle">$283,001</text>
<text x="1049.45" y="538" font-size="8" font-weight="bold" fill="#222" text-anchor="middle">Product</text>
<path d="M1136.70 526.80V413.00q0 -2 2 -2H1174.20q2 0 2 2V526.80z" fill="#8b2252"/>
<path d="M1178.40 526.80V453.88q0 -2 2 -2H1215.90q2 0 2 2V526.80z" fill="#b03060"/>
<text x="1156.45" y="401.50" font-size="8.3" font-weight="bold" fill="#333" text-anchor="middle">$752,956</text>
<text x="1198.15" y="442.38" font-size="8.3" font-weight="bold" fill="#333" text-anchor="middle">$487,099</text>
<text x="1177.30" y="538" font-size="8" font-weight="bold" fill="#222" text-anchor="middle">Sales</text>
<rect x="715.4" y="546.0" width="9.6" height="9.2" fill="#8b2252"/>
<text x="732" y="553.0" font-size="8" font-weight="bold" fill="#222">Revenue</text>
<rect x="778.8" y="546.0" width="9.8" height="9.2" fill="#b03060"/>
<text x="796" y="553.0" font-size="8" font-weight="bold" fill="#222">Expenses</text>
</svg></div>
</div></body></html>
